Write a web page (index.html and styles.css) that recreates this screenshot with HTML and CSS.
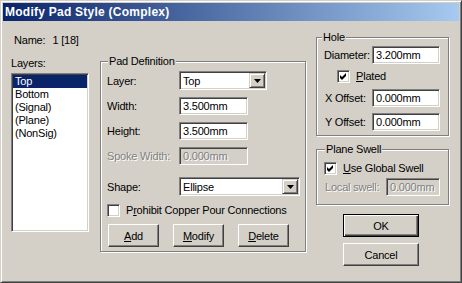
FILE: index.html
```html
<!DOCTYPE html>
<html>
<head>
<meta charset="utf-8">
<link rel="stylesheet" href="styles.css">
</head>
<body>
<div class="window">
  <div class="titlebar">Modify Pad Style (Complex)</div>
  <div class="client">
    <div class="col-left">
      <div class="name">Name:<span class="name-val">1 [18]</span></div>
      <div class="layers-label">Layers:</div>
      <div class="listbox">
        <div class="item selected">Top</div>
        <div class="item">Bottom</div>
        <div class="item">(Signal)</div>
        <div class="item">(Plane)</div>
        <div class="item">(NonSig)</div>
      </div>
    </div>

    <div class="group pad">
      <span class="group-title">Pad Definition</span>
      <div class="row r-layer">
        <span class="lbl">Layer:</span>
        <div class="combo combo-layer"><span class="combo-text">Top</span><span class="drop"><svg width="7" height="4" viewBox="0 0 7 4"><polygon points="0,0 7,0 3.5,4" fill="#000"/></svg></span></div>
      </div>
      <div class="row r-gap7">
        <span class="lbl">Width:</span>
        <div class="edit edit-w">3.500mm</div>
      </div>
      <div class="row r-gap7">
        <span class="lbl">Height:</span>
        <div class="edit edit-w">3.500mm</div>
      </div>
      <div class="row r-gap7">
        <span class="lbl disabled">Spoke Width:</span>
        <div class="edit edit-w edit-disabled">0.000mm</div>
      </div>
      <div class="row r-gap12">
        <span class="lbl">Shape:</span>
        <div class="combo combo-shape"><span class="combo-text">Ellipse</span><span class="drop"><svg width="7" height="4" viewBox="0 0 7 4"><polygon points="0,0 7,0 3.5,4" fill="#000"/></svg></span></div>
      </div>
      <div class="row r-check">
        <span class="check"></span>
        <span class="check-label">P<u>r</u>ohibit Copper Pour Connections</span>
      </div>
      <div class="btn-row">
        <div class="btn btn-small"><u>A</u>dd</div>
        <div class="btn btn-small"><u>M</u>odify</div>
        <div class="btn btn-small"><u>D</u>elete</div>
      </div>
    </div>

    <div class="col-right">
      <div class="group hole">
        <span class="group-title">Hole</span>
        <div class="row">
          <span class="lbl lbl-hole">Diameter:</span>
          <div class="edit edit-h">3.200mm</div>
        </div>
        <div class="row r-plated">
          <span class="check checked"><svg width="9" height="9" viewBox="0 0 9 9"><polygon points="1,3 3,5 7,1 7,4 3,8 1,6" fill="#000"/></svg></span>
          <span class="check-label"><u>P</u>lated</span>
        </div>
        <div class="row r-gap6">
          <span class="lbl lbl-hole lbl-off">X Offset:</span>
          <div class="edit edit-h">0.000mm</div>
        </div>
        <div class="row r-gap6">
          <span class="lbl lbl-hole lbl-off">Y Offset:</span>
          <div class="edit edit-h">0.000mm</div>
        </div>
      </div>

      <div class="group swell">
        <span class="group-title">Plane Swell</span>
        <div class="row r-global">
          <span class="check checked"><svg width="9" height="9" viewBox="0 0 9 9"><polygon points="1,3 3,5 7,1 7,4 3,8 1,6" fill="#000"/></svg></span>
          <span class="check-label"><u>U</u>se Global Swell</span>
        </div>
        <div class="row r-local">
          <span class="lbl lbl-local disabled">Local swell:</span>
          <div class="edit edit-s edit-disabled">0.000mm</div>
        </div>
      </div>

      <div class="btn btn-big btn-default">OK</div>
      <div class="btn btn-big btn-cancel">Cancel</div>
    </div>
  </div>
</div>
</body>
</html>
```

FILE: styles.css
```css
* { box-sizing: border-box; }
html, body { margin: 0; padding: 0; }
body {
  width: 462px;
  height: 283px;
  overflow: hidden;
  background: #d4d0c8;
  font-family: "Liberation Sans", Arial, sans-serif;
  font-size: 11px;
  letter-spacing: -0.2px;
  color: #000;
}
u { text-decoration: underline; text-underline-offset: 1px; }

.window {
  width: 462px;
  height: 283px;
  background: #d4d0c8;
  border: 1px solid;
  border-color: #d4d0c8 #404040 #404040 #d4d0c8;
  box-shadow: inset 1px 1px 0 #fff, inset -1px -1px 0 #808080;
  padding: 2px;
}
.titlebar {
  height: 18px;
  line-height: 18px;
  padding-left: 2px;
  background: linear-gradient(to right, #0a246a, #a6caf0);
  color: #fff;
  font-weight: bold;
  font-size: 12px;
  letter-spacing: 0.25px;
}
.client {
  display: flex;
  align-items: flex-start;
}

/* left column */
.col-left {
  margin-left: 8px;
  padding-top: 13px;
  width: 78px;
}
.name { padding-left: 3px; line-height: 13px; height: 13px; }
.name-val { margin-left: 7px; }
.layers-label { margin-top: 10px; line-height: 13px; height: 13px; }
.listbox {
  margin-top: 3px;
  width: 78px;
  height: 159px;
  background: #fff;
  border: 1px solid;
  border-color: #808080 #fff #fff #808080;
  box-shadow: inset 1px 1px 0 #404040, inset -1px -1px 0 #d4d0c8;
  padding: 1px;
}
.item { line-height: 13px; height: 13px; padding-left: 2px; white-space: nowrap; }
.item.selected { background: #0a246a; color: #fff; }

/* group boxes */
.group {
  position: relative;
  border: 1px solid #808080;
  box-shadow: 1px 1px 0 #fff, inset 1px 1px 0 #fff;
}
.group-title {
  position: absolute;
  top: -7px;
  line-height: 13px;
  padding: 0 1px;
  background: #d4d0c8;
  white-space: nowrap;
}
.row { display: flex; align-items: center; }
.lbl { white-space: nowrap; }
.disabled { color: #808080; text-shadow: 1px 1px 0 #fff; }

/* pad definition */
.pad {
  margin-left: 11px;
  margin-top: 40px;
  width: 206px;
  padding: 9px 0 4px 6px;
}
.pad .group-title { left: 7px; }
.pad .lbl { width: 72px; }
.r-gap7 { margin-top: 7px; }
.r-gap12 { margin-top: 12px; }
.r-check { margin-top: 8px; height: 13px; }
.btn-row { display: flex; gap: 14px; margin-top: 7px; margin-left: 1px; }

/* edits */
.edit {
  height: 18px;
  line-height: 14px;
  padding: 1px 2px 1px 3px;
  background: #fff;
  border: 1px solid;
  border-color: #808080 #fff #fff #808080;
  box-shadow: inset 1px 1px 0 #404040, inset -1px -1px 0 #d4d0c8;
  white-space: nowrap;
}
.edit-w { width: 69px; }
.edit-h { width: 68px; }
.edit-s { width: 54px; }
.edit-disabled { background: #d4d0c8; color: #808080; text-shadow: 1px 1px 0 #fff; }

/* combos */
.combo {
  height: 19px;
  display: flex;
  align-items: center;
  justify-content: space-between;
  background: #fff;
  border: 1px solid;
  border-color: #808080 #fff #fff #808080;
  box-shadow: inset 1px 1px 0 #404040, inset -1px -1px 0 #d4d0c8;
  padding: 1px 1px 1px 3px;
}
.combo-layer { width: 88px; }
.combo-shape { width: 121px; }
.drop {
  width: 16px;
  height: 15px;
  display: flex;
  align-items: center;
  justify-content: center;
  background: #d4d0c8;
  border: 1px solid;
  border-color: #d4d0c8 #404040 #404040 #d4d0c8;
  box-shadow: inset 1px 1px 0 #fff, inset -1px -1px 0 #808080;
}
.drop svg { display: block; }

/* checkbox */
.check {
  width: 13px;
  height: 13px;
  flex: none;
  background: #fff;
  border: 1px solid;
  border-color: #808080 #fff #fff #808080;
  box-shadow: inset 1px 1px 0 #404040, inset -1px -1px 0 #d4d0c8;
  padding: 1px;
}
.check svg { display: block; }
.check-label { margin-left: 6px; white-space: nowrap; line-height: 13px; }

/* buttons */
.btn {
  display: flex;
  align-items: center;
  justify-content: center;
  background: #d4d0c8;
  border: 1px solid;
  border-color: #fff #404040 #404040 #fff;
  box-shadow: inset -1px -1px 0 #808080;
  white-space: nowrap;
}
.btn-small { width: 51px; height: 23px; }
.btn-big { width: 76px; height: 23px; margin-left: 27px; }
.btn-default {
  margin-top: 9px;
  border: 1px solid #000;
  box-shadow: inset 1px 1px 0 #fff, inset -1px -1px 0 #404040, inset -2px -2px 0 #808080;
}
.btn-cancel { margin-top: 6px; }

/* right column */
.col-right {
  margin-left: 10px;
  margin-top: 16px;
  width: 133px;
}
.hole { width: 133px; padding: 8px 0 4px 7px; }
.hole .group-title { left: 5px; }
.lbl-hole { width: 48px; }
.lbl-off { padding-left: 1px; }
.r-plated { margin-top: 6px; margin-left: 13px; height: 13px; }
.r-gap6 { margin-top: 6px; }

.swell { width: 133px; margin-top: 13px; padding: 12px 0 8px 7px; }
.swell .group-title { left: 8px; }
.r-global { height: 13px; }
.r-local { margin-top: 3px; }
.lbl-local { width: 62px; padding-left: 1px; }
```
